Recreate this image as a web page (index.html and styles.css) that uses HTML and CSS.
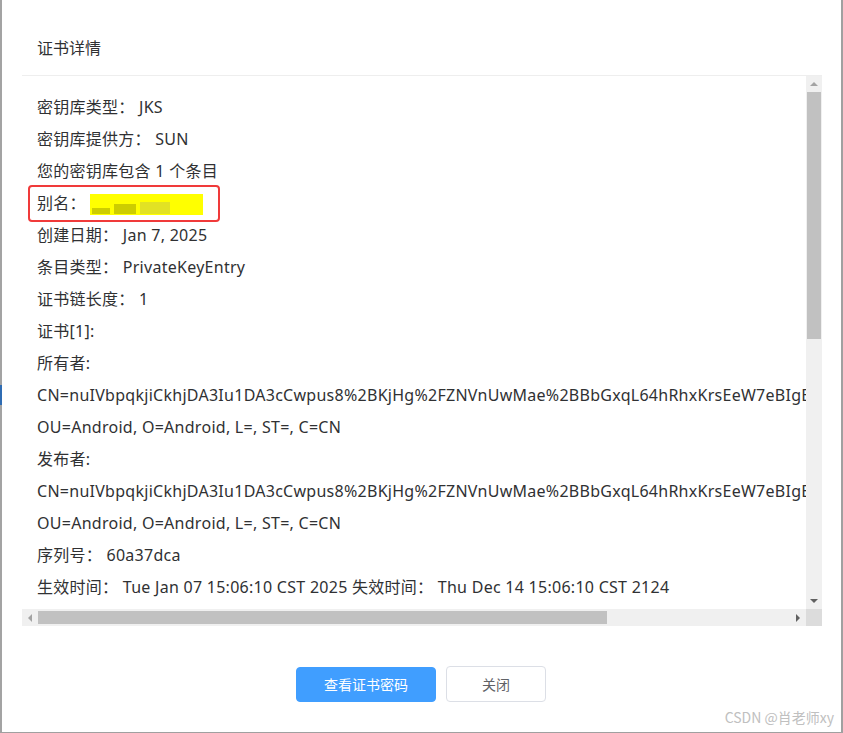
FILE: index.html
```html
<!DOCTYPE html>
<html lang="zh">
<head>
<meta charset="utf-8">
<link rel="stylesheet" href="styles.css">
</head>
<body>
<div class="frame">
  <div class="edge-left"><span class="edge-blue"></span></div>
  <div class="dialog">
    <div class="title">证书详情</div>
    <div class="panel">
      <div class="content">
        <div class="line">密钥库类型： JKS</div>
        <div class="line">密钥库提供方： SUN</div>
        <div class="line">您的密钥库包含 1 个条目</div>
        <div class="line alias">别名： <span class="blur"><i class="b1"></i><i class="b2"></i><i class="b3"></i></span><span class="mark"></span></div>
        <div class="line">创建日期： Jan 7, 2025</div>
        <div class="line">条目类型： PrivateKeyEntry</div>
        <div class="line">证书链长度： 1</div>
        <div class="line">证书[1]:</div>
        <div class="line">所有者:</div>
        <div class="line">CN=nuIVbpqkjiCkhjDA3Iu1DA3cCwpus8%2BKjHg%2FZNVnUwMae%2BBbGxqL64hRhxKrsEeW7eBIgE</div>
        <div class="line">OU=Android, O=Android, L=, ST=, C=CN</div>
        <div class="line">发布者:</div>
        <div class="line">CN=nuIVbpqkjiCkhjDA3Iu1DA3cCwpus8%2BKjHg%2FZNVnUwMae%2BBbGxqL64hRhxKrsEeW7eBIgE</div>
        <div class="line">OU=Android, O=Android, L=, ST=, C=CN</div>
        <div class="line">序列号： 60a37dca</div>
        <div class="line">生效时间： Tue Jan 07 15:06:10 CST 2025 失效时间： Thu Dec 14 15:06:10 CST 2124</div>
      </div>
      <div class="vbar">
        <span class="arrow up"></span>
        <span class="vthumb"></span>
        <span class="arrow down"></span>
      </div>
      <div class="hbar">
        <span class="arrow left"></span>
        <span class="hthumb"></span>
        <span class="arrow right"></span>
      </div>
      <div class="corner"></div>
    </div>
    <div class="footer">
      <button class="btn primary">查看证书密码</button>
      <button class="btn plain">关闭</button>
    </div>
    <div class="watermark">CSDN @肖老师xy</div>
  </div>
</div>
</body>
</html>
```
FILE: styles.css
```css
html, body {
  margin: 0;
  padding: 0;
  background: #fff;
}
.frame {
  width: 843px;
  height: 733px;
  display: flex;
  box-sizing: border-box;
  border-bottom: 1px solid #a0a0a0;
  border-right: 2px solid #a0a0a0;
  font-family: "Noto Sans", "Noto Sans CJK SC", sans-serif;
  color: #303133;
}
.edge-left {
  width: 2px;
  background: #a3a3a3;
  display: flex;
  flex-direction: column;
  padding-top: 385px;
}
.edge-blue {
  display: block;
  height: 20px;
  background: #2f6cb3;
}
.dialog {
  flex: 1;
  position: relative;
  display: flex;
  flex-direction: column;
}
.title {
  height: 75px;
  box-sizing: border-box;
  padding: 37px 0 0 35px;
  font-size: 16px;
  line-height: 22px;
}
.panel {
  margin-left: 20px;
  width: 800px;
  height: 551px;
  border-top: 1px solid #eeeeee;
  display: grid;
  grid-template-columns: 784px 16px;
  grid-template-rows: 533px 17px;
}
.content {
  overflow: hidden;
  padding: 15px 0 0 15px;
  font-size: 16px;
  line-height: 32px;
  letter-spacing: 0.27px;
}
.line {
  white-space: nowrap;
  position: relative;
}
.blur {
  display: inline-flex;
  vertical-align: middle;
  width: 113px;
  height: 21px;
  background: #ffff00;
  align-items: flex-end;
  gap: 4px;
  padding: 0 0 1px 2px;
  box-sizing: border-box;
}
.blur i {
  display: block;
  height: 6px;
  background: #b8b800;
  opacity: 0.7;
}
.blur .b1 { width: 18px; }
.blur .b2 { width: 22px; height: 10px; }
.blur .b3 { width: 30px; height: 12px; background: #d6d633; }
.mark {
  position: absolute;
  left: -9px;
  top: -2px;
  width: 192px;
  height: 37px;
  box-sizing: border-box;
  border: 2px solid #f03a3a;
  border-radius: 4px;
}
.vbar {
  background: #f0f0f0;
  display: flex;
  flex-direction: column;
  align-items: center;
  padding: 6px 0;
}
.vthumb {
  display: block;
  width: 14px;
  height: 247px;
  margin: 6px 0 0;
  background: #c1c1c1;
}
.vbar .down { margin-top: auto; }
.hbar {
  background: #f0f0f0;
  display: flex;
  align-items: center;
  padding: 0 6px;
}
.hthumb {
  display: block;
  height: 13px;
  width: 569px;
  margin-left: 6px;
  background: #c1c1c1;
}
.hbar .right { margin-left: auto; }
.corner { background: #dcdcdc; }
.arrow {
  display: block;
  width: 0;
  height: 0;
  border: 4px solid transparent;
}
.arrow.up { border-bottom-color: #a3a3a3; border-top-width: 0; }
.arrow.down { border-top-color: #606060; border-bottom-width: 0; }
.arrow.left { border-right-color: #a3a3a3; border-left-width: 0; }
.arrow.right { border-left-color: #606060; border-right-width: 0; }
.footer {
  display: flex;
  justify-content: center;
  align-items: center;
  gap: 10px;
  padding: 39px 0 0 0;
  margin-left: -1px;
}
.btn {
  font-family: "Noto Sans CJK SC", sans-serif;
  font-size: 14px;
  height: 35px;
  border-radius: 4px;
  cursor: pointer;
}
.primary {
  width: 140px;
  background: #409eff;
  border: 1px solid #409eff;
  color: #fff;
}
.plain {
  width: 100px;
  height: 36px;
  background: #fff;
  border: 1px solid #dcdfe6;
  color: #606266;
}
.watermark {
  position: absolute;
  right: 7px;
  bottom: 5px;
  font-family: "Noto Sans CJK SC", sans-serif;
  font-size: 14px;
  color: #c0c0c0;
}
```
